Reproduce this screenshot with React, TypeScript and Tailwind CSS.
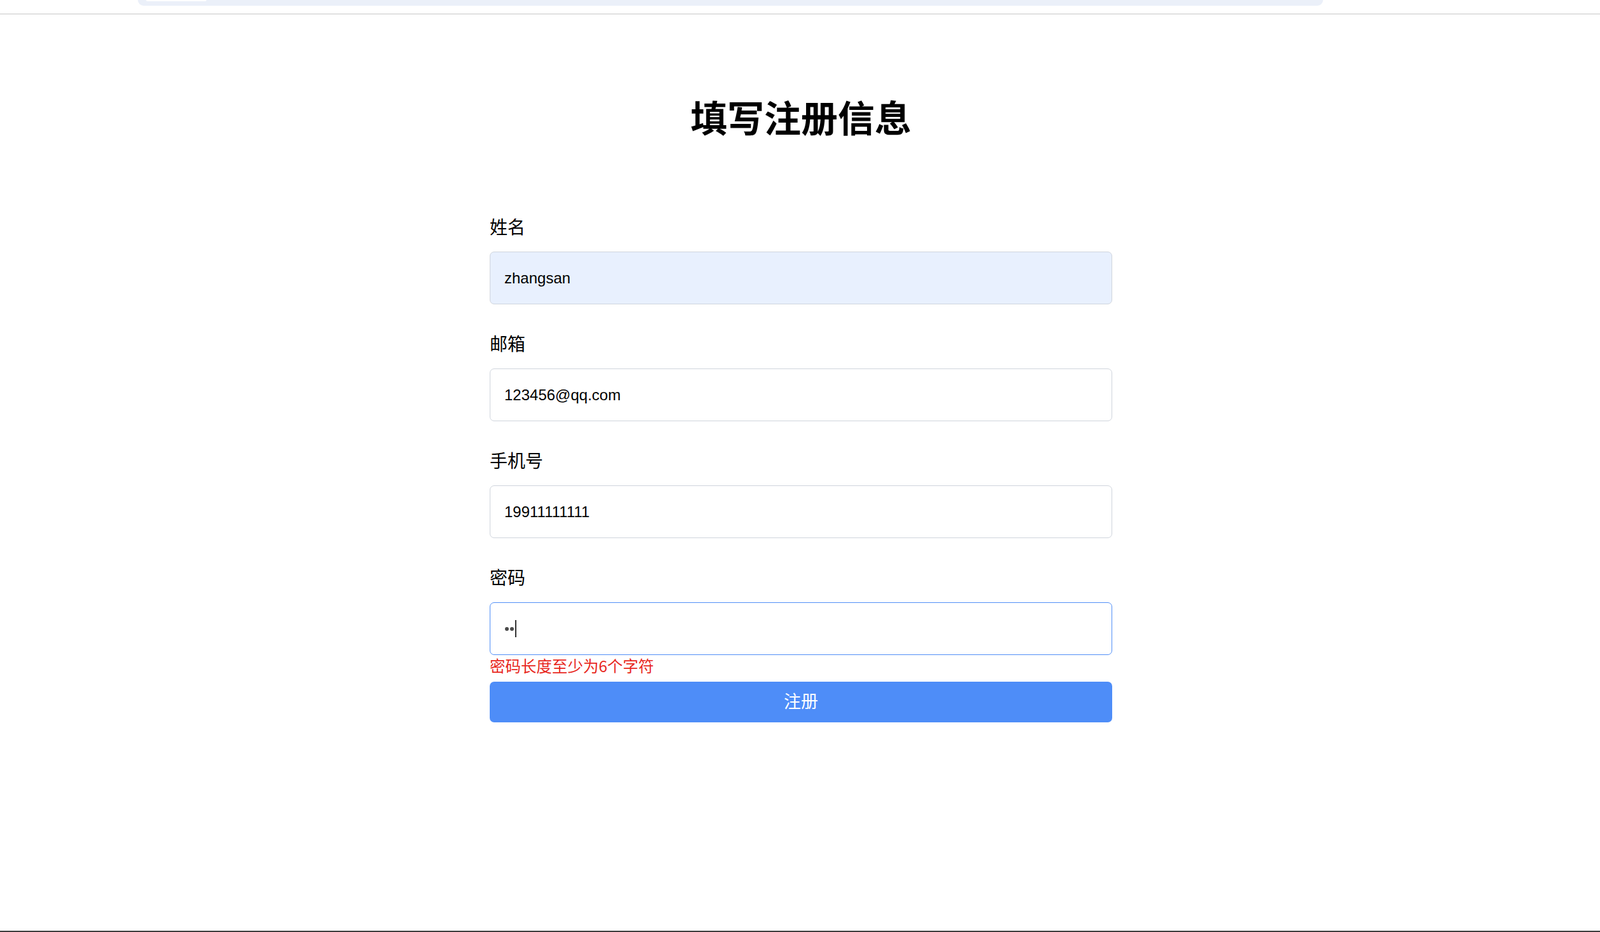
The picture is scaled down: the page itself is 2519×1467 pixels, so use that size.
import { useState } from 'react'

const cjk = "font-['Noto_Sans_CJK_SC',sans-serif]"
const latin = "font-['Liberation_Sans','Noto_Sans_CJK_SC',sans-serif]"

interface FieldProps {
  label: string
  value: string
  autofill?: boolean
}

function Field({ label, value, autofill }: FieldProps) {
  return (
    <div className="mb-[42px]">
      <label className={`block text-[28px] leading-[38px] text-black mb-[21px] ${cjk}`}>{label}</label>
      <input
        readOnly
        value={value}
        className={`block w-full h-[83px] px-[22px] rounded-[7px] border border-[#cfd4dc] text-[24px] text-black outline-none ${latin} ${
          autofill ? 'bg-[#e8f0fe]' : 'bg-white'
        }`}
      />
    </div>
  )
}

export default function App() {
  const [password] = useState('12')

  return (
    <div className="h-[1467px] bg-white flex flex-col">
      {/* browser tab strip remnant */}
      <div className="h-[23px] border-b-2 border-[#e0e0e0] shrink-0">
        <div className="ml-[217px] w-[1866px] h-[9px] bg-[#ebf0f9] rounded-b-[12px] pl-[13px]">
          <div className="w-[95px] h-[2px] bg-white rounded-b-[3px]" />
        </div>
      </div>

      <main className="flex-1 pt-[127px] pl-[3px]">
        <h1 className={`text-center text-[58px] leading-[67px] font-bold text-black ${cjk}`}>填写注册信息</h1>

        <form className="w-[980px] mx-auto mt-[120px]" onSubmit={e => e.preventDefault()}>
          <Field label="姓名" value="zhangsan" autofill />
          <Field label="邮箱" value="123456@qq.com" />
          <Field label="手机号" value="19911111111" />

          {/* 密码 (focused) */}
          <div>
            <label className={`block text-[28px] leading-[38px] text-black mb-[21px] ${cjk}`}>密码</label>
            <div className="flex items-center h-[83px] px-[23px] rounded-[7px] border border-[#4f8ef7] bg-white">
              {password.split('').map((_, i) => (
                <span key={i} className="w-[6px] h-[6px] rounded-full bg-[#4a4a4a] mr-[2px]" />
              ))}
              <span className="w-[2px] h-[27px] bg-[#333]" />
            </div>
            <p className={`mt-[2px] text-[24.5px] leading-[30px] text-[#e8281e] ${cjk}`}>密码长度至少为6个字符</p>
          </div>

          <button
            type="submit"
            className={`block w-full h-[64px] mt-[10px] pb-[4px] rounded-[7px] bg-[#4e8df8] text-white text-[27px] ${cjk}`}
          >
            注册
          </button>
        </form>
      </main>

      <div className="h-[2px] bg-[#3c3c3c] shrink-0" />
    </div>
  )
}
